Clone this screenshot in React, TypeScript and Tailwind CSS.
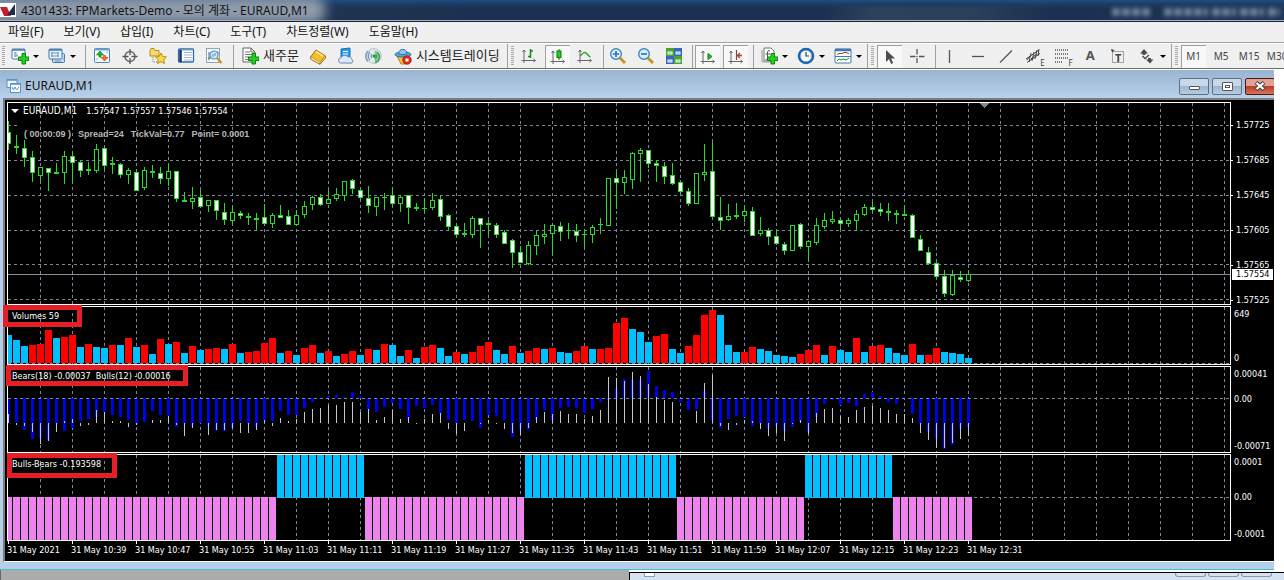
import type { ReactNode } from "react";

type Kind = "f" | "h" | "d";
type Candle = [high: number, low: number, top: number, bottom: number, kind: Kind];

const STEP = 8;
const GRID_X = Array.from({ length: 38 }, (_, i) => 32 + i * 32);

// Chart levels are kept in pixels below the top of the window's client area.
const candles: Candle[] = [
  [121, 150, 132, 144, "f"], [135, 154, 146, 148, "d"], [140, 167, 148, 158, "f"], [151, 182, 157, 173, "f"],
  [167, 183, 167, 176, "h"], [168, 191, 168, 173, "f"], [163, 174, 172, 174, "d"], [151, 184, 156, 173, "h"],
  [151, 183, 156, 163, "f"], [161, 177, 162, 171, "f"], [162, 175, 169, 171, "d"], [144, 173, 149, 171, "h"],
  [148, 169, 148, 166, "f"], [157, 174, 163, 165, "d"], [163, 178, 164, 175, "f"], [168, 184, 170, 175, "h"],
  [169, 191, 172, 191, "f"], [167, 190, 170, 188, "h"], [165, 178, 171, 173, "d"], [167, 184, 173, 179, "f"],
  [164, 186, 171, 179, "h"], [171, 202, 171, 199, "f"], [192, 202, 200, 202, "d"], [187, 209, 198, 202, "h"],
  [190, 207, 197, 207, "f"], [200, 212, 200, 206, "h"], [200, 220, 200, 211, "f"], [203, 225, 212, 220, "f"],
  [206, 223, 212, 221, "h"], [211, 219, 213, 216, "f"], [213, 225, 216, 218, "d"], [213, 230, 218, 220, "d"],
  [204, 226, 217, 224, "f"], [213, 228, 215, 224, "h"], [205, 218, 215, 218, "f"], [210, 225, 216, 225, "f"],
  [210, 226, 215, 225, "h"], [201, 218, 206, 215, "h"], [196, 210, 197, 205, "h"], [194, 206, 197, 205, "f"],
  [190, 204, 199, 204, "h"], [188, 201, 194, 199, "h"], [181, 201, 181, 196, "h"], [179, 194, 180, 189, "f"],
  [188, 199, 190, 198, "f"], [186, 213, 198, 206, "f"], [197, 216, 197, 207, "h"], [193, 210, 197, 198, "d"],
  [187, 206, 195, 204, "f"], [195, 212, 197, 204, "h"], [195, 224, 195, 208, "f"], [203, 211, 207, 209, "d"],
  [198, 213, 208, 209, "d"], [193, 210, 200, 208, "h"], [195, 221, 199, 217, "f"], [214, 230, 215, 227, "f"],
  [223, 237, 226, 235, "f"], [223, 237, 233, 235, "d"], [216, 238, 218, 235, "h"], [218, 248, 218, 225, "f"],
  [220, 235, 223, 225, "d"], [223, 238, 225, 235, "f"], [230, 244, 232, 244, "f"], [239, 268, 240, 253, "f"],
  [246, 263, 252, 263, "f"], [241, 265, 245, 264, "h"], [230, 255, 235, 246, "h"], [224, 244, 234, 237, "h"],
  [223, 254, 225, 234, "h"], [222, 241, 226, 232, "f"], [223, 239, 230, 231, "d"], [224, 242, 231, 236, "f"],
  [230, 248, 234, 235, "d"], [225, 243, 227, 235, "h"], [218, 234, 224, 225, "d"], [178, 226, 178, 226, "h"],
  [172, 209, 178, 183, "f"], [170, 194, 177, 183, "h"], [152, 189, 153, 180, "h"], [148, 182, 150, 154, "h"],
  [150, 168, 150, 164, "f"], [160, 182, 163, 166, "f"], [162, 184, 166, 177, "f"], [163, 185, 175, 184, "f"],
  [180, 195, 182, 192, "f"], [188, 206, 191, 204, "f"], [173, 204, 173, 204, "h"], [144, 181, 172, 175, "h"],
  [142, 219, 171, 217, "f"], [197, 230, 217, 221, "f"], [204, 221, 216, 220, "h"], [203, 219, 215, 217, "d"],
  [205, 222, 211, 216, "h"], [207, 236, 211, 236, "f"], [217, 236, 230, 234, "h"], [228, 245, 230, 237, "f"],
  [229, 245, 236, 244, "f"], [242, 255, 244, 251, "f"], [225, 251, 225, 251, "h"], [223, 249, 224, 247, "f"],
  [240, 262, 241, 247, "h"], [218, 245, 225, 243, "h"], [213, 229, 220, 227, "h"], [211, 224, 219, 222, "h"],
  [219, 230, 220, 224, "f"], [218, 227, 220, 224, "h"], [210, 231, 214, 221, "h"], [204, 216, 207, 215, "h"],
  [202, 212, 207, 210, "f"], [203, 216, 209, 212, "f"], [203, 221, 211, 213, "d"], [210, 224, 213, 215, "d"],
  [205, 216, 214, 216, "d"], [214, 238, 215, 238, "f"], [235, 251, 239, 251, "f"], [247, 265, 252, 264, "f"],
  [262, 278, 263, 277, "f"], [270, 297, 276, 294, "f"], [270, 296, 275, 295, "h"], [271, 282, 277, 280, "f"],
  [270, 282, 274, 281, "h"],
];

const volumeTops = [
  335, 340, 346, 345, 344, 330, 338, 337, 335, 347, 344, 347, 348, 345, 345, 338, 347, 345, 354, 339, 344, 342, 353,
  346, 350, 349, 348, 349, 344, 353, 352, 351, 343, 338, 353, 351, 355, 348, 345, 353, 351, 356, 354, 351, 355, 349,
  350, 344, 345, 356, 350, 358, 347, 345, 348, 356, 352, 354, 352, 346, 342, 350, 354, 346, 353, 351, 348, 349, 348,
  352, 353, 351, 346, 349, 349, 348, 323, 318, 329, 332, 342, 336, 334, 349, 353, 346, 335, 315, 310, 315, 345, 352,
  352, 347, 349, 351, 355, 356, 357, 354, 350, 345, 355, 346, 350, 352, 338, 352, 346, 345, 348, 353, 355, 344, 355,
  355, 348, 352, 353, 354, 358,
];

// One letter per bar: r = red, c = cyan.
const volumeKinds = [
  "cccrrrcrrc", "rccrcrcrcr", "crcrcrrcrc", "rrrrcrcrrc", "rcrrcrcrcc", "rcrrccrcrr", "rccrcrrcrc",
  "crrcrrrrcc", "crrccrrrrc", "ccrrcccccr", "rrcrccrcrr", "cccrcrrccc", "c",
].join("");

const bearLevels = [
  420, 422, 430, 439, 438, 440, 424, 431, 428, 421, 419, 417, 412, 415, 417, 420, 424, 422, 411, 415, 416, 427, 424,
  426, 423, 426, 430, 431, 428, 421, 424, 427, 421, 421, 411, 415, 415, 408, 402, 399, 396, 395, 397, 392, 396, 410,
  412, 407, 403, 409, 419, 406, 408, 405, 414, 420, 423, 420, 421, 428, 415, 416, 420, 437, 429, 430, 420, 410, 420,
  408, 407, 408, 413, 409, 402, 400, 388, 379, 380, 380, 371, 386, 390, 392, 402, 410, 409, 391, 420, 428, 419, 416,
  417, 426, 424, 429, 426, 431, 427, 422, 432, 417, 404, 400, 405, 403, 406, 394, 392, 396, 402, 404, 397, 414, 424,
  432, 439, 449, 445, 429, 427,
];

const bullLevels = [
  414, 425, 426, 432, 444, 441, 432, 421, 419, 426, 425, 410, 412, 421, 421, 427, 425, 423, 420, 420, 416, 425, 436,
  428, 423, 435, 430, 430, 428, 433, 433, 430, 420, 426, 418, 421, 419, 412, 409, 408, 405, 405, 402, 402, 412, 409,
  420, 417, 410, 419, 417, 424, 419, 414, 413, 429, 434, 431, 423, 424, 420, 424, 429, 433, 435, 428, 417, 412, 414,
  411, 414, 414, 419, 416, 410, 377, 378, 381, 372, 376, 384, 397, 400, 402, 420, 423, 411, 383, 375, 426, 430, 425,
  420, 421, 429, 436, 433, 441, 424, 420, 434, 413, 409, 408, 416, 417, 410, 407, 406, 408, 410, 414, 414, 418, 433,
  440, 448, 448, 443, 439, 436,
];

const trendRuns: [from: number, to: number, up: boolean][] = [
  [0, 33, false], [34, 44, true], [45, 64, false], [65, 83, true], [84, 99, false], [100, 110, true], [111, 120, false],
];

const priceLabels = ["1.57725", "1.57685", "1.57645", "1.57605", "1.57565", "1.57525"];
const priceGrid = [125, 160, 195, 230, 264, 299];
const times = [
  "2021", "10:39", "10:47", "10:55", "11:03", "11:11", "11:19", "11:27", "11:35", "11:43", "11:51", "11:59", "12:07",
  "12:15", "12:23", "12:31",
];

const GRID = "#7d8794";
const GREEN = "#2fd62f";

function Grid({ rows }: { rows: number[] }) {
  return (
    <g stroke={GRID} strokeDasharray="3 3">
      {GRID_X.map((x) => (
        <line key={x} x1={x + 0.5} x2={x + 0.5} y1="0" y2="100%" />
      ))}
      {rows.map((y) => (
        <line key={y} x1="0" x2="100%" y1={y + 0.5} y2={y + 0.5} />
      ))}
    </g>
  );
}

function Panel({ height, axis, children, caption }: { height: string; axis: ReactNode; children: ReactNode; caption: ReactNode }) {
  return (
    <div className={`flex ${height}`}>
      <div className="relative min-w-0 flex-1 border border-white">
        <svg className="absolute inset-0 h-full w-full" shapeRendering="crispEdges">{children}</svg>
        {caption}
      </div>
      <div className="relative w-[43px] shrink-0">{axis}</div>
    </div>
  );
}

function PriceChart() {
  const top = 103;
  return (
    <>
      <Grid rows={priceGrid.map((y) => y - top)} />
      <rect x="10" y="21" width="130" height="3" fill="#000" />
      <line x1="0" x2="100%" y1="171.5" y2="171.5" stroke="#8a8a9c" />
      <path d="M972 0h9v1l-4.500 4l-4.500 -4z" fill="#7d8794" />
      {candles.map(([high, low, t, b, kind], i) => {
        const x = i * STEP;
        return (
          <g key={i}>
            <rect x={x} y={high - top} width="1" height={low - high} fill={GREEN} />
            {kind === "d" ? (
              <rect x={x - 2} y={t - top} width="5" height={b - t} fill={GREEN} />
            ) : (
              <rect
                x={x - 1.5}
                y={t - top + 0.5}
                width="4"
                height={b - t - 1}
                fill={kind === "f" ? "#fff" : "#000"}
                stroke={GREEN}
              />
            )}
          </g>
        );
      })}
    </>
  );
}

function VolumeChart() {
  return (
    <>
      <Grid rows={[56]} />
      {volumeTops.map((y, i) => (
        <rect key={i} x={i * STEP - 3} y={y - 307} width="7" height={363 - y} fill={volumeKinds[i] === "r" ? "#ff0000" : "#00bfff"} />
      ))}
    </>
  );
}

function PowerChart() {
  const top = 367;
  const zero = 398;
  const base = 423;
  return (
    <>
      <Grid rows={[]} />
      {bearLevels.map((y, i) => (
        <rect key={i} x={i * STEP - 1} y={Math.min(y, zero) - top} width="3" height={Math.abs(y - zero)} fill="#0000e6" />
      ))}
      <line x1="0" x2="100%" y1="31.5" y2="31.5" stroke={GRID} strokeDasharray="3 3" />
      {bullLevels.map((y, i) => (
        <rect key={i} x={i * STEP} y={Math.min(y, base) - top} width="1" height={Math.abs(y - base)} fill="#c8c8c8" />
      ))}
    </>
  );
}

function TrendChart() {
  return (
    <>
      <Grid rows={[42]} />
      {trendRuns.flatMap(([from, to, up]) =>
        Array.from({ length: to - from + 1 }, (_, k) => {
          const x = (from + k) * STEP - 3;
          return <rect key={x} x={x} y={up ? 0 : 42} width="7" height="43" fill={up ? "#00bfff" : "#ee82ee"} />;
        }),
      )}
    </>
  );
}

function Icon({ children }: { children: ReactNode }) {
  return (
    <svg className="h-[18px] w-[18px] shrink-0" viewBox="0 0 18 18" fill="none" aria-hidden="true">
      {children}
    </svg>
  );
}

const plus = (
  <path d="M11 6.500h3.500v3.500H18v3.500h-3.500V17H11v-3.500H7.500V10H11z" fill="#22d022" stroke="#0b850b" strokeWidth="1" />
);
const axes = <path d="M4 3v13M1.500 13.500H15M2.500 5L4 3l1.500 2M13.500 12l2 1.500l-2 1.500" stroke="#666" />;

const icons = {
  newChart: (<><rect x="1" y="2" width="13" height="10" rx="1" fill="#fff" stroke="#3f78ad" /><path d="M1 3h13" stroke="#3f78ad" strokeWidth="1.500" /><path d="M3 6h3M3 9h4M4 5v5M6 7v2" stroke="#7896b4" />{plus}</>),
  profiles: (<><rect x="4.500" y="6.500" width="12" height="9" rx="1" fill="#c7dcf2" stroke="#3f78ad" /><rect x="1" y="2" width="13" height="10" rx="1" fill="#e8f2fc" stroke="#3f78ad" /><path d="M1 3h13" stroke="#3f78ad" strokeWidth="1.500" /><path d="M3 6h8M3 9h8M4 5v5M10 5v5M15 12h2M7 14h6" stroke="#6f94ba" /></>),
  market: (<><rect x="1.500" y="1.500" width="15" height="14" rx="1" fill="#f7fbff" stroke="#4a86bd" /><path d="M2 2.500h14" stroke="#6da2d2" strokeWidth="2" /><path d="M7 4l3.500 4H8v2H6V8H3.500z" fill="#22b222" stroke="#087808" strokeWidth=".6" /><path d="M11.500 14L8 10.500h2.500v-2h2v2H15z" fill="#f0722a" stroke="#ad3a08" strokeWidth=".6" /><path d="M13 5h2M3 12h2" stroke="#9ab7d2" /></>),
  crosshair: (<><circle cx="9" cy="9.500" r="5" stroke="#666" strokeWidth="1.400" /><path d="M9 2v6M9 11v6M1.500 9.500h6M10.500 9.500h6" stroke="#555" strokeWidth="1.300" /></>),
  navigator: (<><path d="M1 3.500V9h9V3.500H6l-1-2H2z" fill="#f7d96c" stroke="#b58f18" /><path d="M4 10v5h4" stroke="#777" strokeDasharray="1 1" /><path d="M12 6l1.700 3.500l3.800.5l-2.800 2.700l.7 3.800L12 14.700l-3.400 1.800l.7-3.800L6.500 10l3.800-.5z" fill="#ffd84a" stroke="#bd8c0e" /></>),
  terminal: (<><rect x="1.500" y="2" width="15" height="13" rx="1" fill="#fff" stroke="#2f6dab" strokeWidth="1.300" /><path d="M3.500 3v12" stroke="#172f5b" strokeWidth="2.500" /><path d="M7 5.500h8M7 8h8M7 10.500h8M7 13h8" stroke="#9eb9d7" /><path d="M5 3h11" stroke="#6fa1d3" /></>),
  tester: (<><rect x="1.500" y="1.500" width="13" height="14" fill="#f4f8fb" stroke="#8da7bf" /><path d="M4 13V5M3 11h3M12 4v4M11 6h3" stroke="#506f8c" /><circle cx="9" cy="8" r="4" fill="#cce8fb" stroke="#5c92bd" strokeWidth="1.200" /><path d="M8 7v3M10 6v3" stroke="#5c92bd" /><path d="M12 11l4.500 5" stroke="#c8951c" strokeWidth="2.400" /></>),
  order: (<><path d="M2 1h8l4 4v10H2z" fill="#fff" stroke="#666" /><path d="M10 1v4h4" stroke="#666" /><path d="M4 5h5M4 7.500h7M4 10h4M4 12.500h3" stroke="#777" />{plus}</>),
  editor: (<><path d="M1.500 10L7 3l9.500 6L11 15.500z" fill="#f3bd32" stroke="#a56c08" /><path d="M1.500 10v2L11 17.300V15.500M11 17.300L16.500 11V9" fill="#fff2b5" stroke="#a56c08" /><path d="M7 4.500l7 4.500" stroke="#ffe78e" strokeWidth="1.500" /></>),
  cloud: (<><path d="M4 2l9-1v9H4z" fill="#279de8" stroke="#176db5" /><path d="M6 4.500h5M6 7h5" stroke="#fff" strokeWidth="1.200" /><path d="M3.500 16a2.700 2.700 0 01.5-5.300a4 4 0 017-.7a3 3 0 014 2.500a2 2 0 01-.3 3.500z" fill="#dce9f8" stroke="#6387b7" /></>),
  signal: (<><circle cx="9" cy="9" r="7.300" fill="#e3f0ee" stroke="#a5bfd4" /><path d="M5 13a5.500 5.500 0 010-8M7 11a3 3 0 010-4M3 14.500A7 7 0 013 4" stroke="#7898b9" strokeWidth="1.300" /><path d="M9.500 3.500a5.500 5.500 0 010 11z" fill="#8ecb94" /><path d="M12 5.500a5.500 5.500 0 01-2 10M11 7.500a3 3 0 01-1 4" stroke="#3f9b52" strokeWidth="1.400" /><circle cx="9" cy="9" r="1.500" fill="#288b3c" /></>),
  robot: (<><path d="M3 9h12l-4 8H7z" fill="#f4c33c" stroke="#b67a14" /><ellipse cx="9" cy="7.500" rx="8" ry="2.600" fill="#5aa9df" stroke="#2a70a8" /><path d="M4.500 6.500C5 1 12.500 1 13 6.500c-2 1.500-6.500 1.500-8.500 0z" fill="#8bc9ef" stroke="#2a70a8" /><circle cx="13" cy="13" r="4.300" fill="#dc2a16" stroke="#9c160b" strokeWidth=".7" /><rect x="11.500" y="11.500" width="3" height="3" fill="#fff" /></>),
  bars: (<>{axes}<path d="M10.500 2v9M8 9.500h2.500M10.500 4H13" stroke="#138c13" strokeWidth="1.500" /></>),
  candle: (<>{axes}<path d="M10 1v11" stroke="#087808" /><rect x="8" y="3" width="4" height="6.500" fill="#29cc29" stroke="#087808" /></>),
  line: (<>{axes}<path d="M4 9c2-1 3-4 5-3.500S12 9 14.500 10" stroke="#279b27" strokeWidth="1.300" /></>),
  zoomIn: (<><path d="M11 11l5 5" stroke="#ca971d" strokeWidth="3" /><circle cx="7" cy="7" r="5.300" fill="#d9effd" stroke="#3e86c2" strokeWidth="1.400" /><path d="M7 4v6M4 7h6" stroke="#2b6faf" strokeWidth="1.600" /></>),
  zoomOut: (<><path d="M11 11l5 5" stroke="#ca971d" strokeWidth="3" /><circle cx="7" cy="7" r="5.300" fill="#d9effd" stroke="#3e86c2" strokeWidth="1.400" /><path d="M4 7h6" stroke="#2b6faf" strokeWidth="1.600" /></>),
  tiles: (<><path d="M1 1h8v8H1zM9 9h8v8H9z" fill="#48a52d" /><path d="M9 1h8v8H9zM1 9h8v8H1z" fill="#3468bc" /><path d="M2.500 4.500h5v3h-5zM10.500 4.500h5v3h-5zM2.500 12.500h5v3h-5zM10.500 12.500h5v3h-5z" fill="#f3f8ff" /><path d="M3.500 6h3M11.500 6h3M3.500 14h3M11.500 14h3" stroke="#8aa4c4" /></>),
  scroll: (<>{axes}<path d="M9 5.500l4 3l-4 3z" fill="#29bf29" stroke="#0d850d" /></>),
  shift: (<>{axes}<path d="M9.500 2v10" stroke="#555" strokeWidth="1.200" /><path d="M15 7.500h-4M13 5l-2.500 2.500L13 10" stroke="#b84218" strokeWidth="1.400" /></>),
  indicator: (<><path d="M4 1h7l3 3v10H4z" fill="#fff" stroke="#777" /><path d="M2 3v12h9" stroke="#999" /><path d="M10 4c-2-1-2.500 0-2.500 2v5c0 2-1 2-2 1.500M5.500 7H10" stroke="#555" />{plus}</>),
  clock: (<><circle cx="9" cy="9" r="7" fill="#f2f8fd" stroke="#1d68b6" strokeWidth="2.600" /><path d="M9 5v4h3" stroke="#444" strokeWidth="1.200" /><path d="M9 3v1M9 14v1M3.500 9h1M13.500 9h1" stroke="#777" /></>),
  template: (<><rect x="1" y="2" width="16" height="14" rx="1" fill="#fff" stroke="#3f78b3" /><path d="M1 3h16" stroke="#3f78b3" strokeWidth="2.500" /><path d="M1 9.500h16" stroke="#3f78b3" /><path d="M3 7.500l2-1h3l2-1h2l3 1" stroke="#a53d20" /><path d="M3 14l2-2l2 1l2-1l3 1l3-2" stroke="#24852f" /></>),
  cursor: <path d="M5 2v12l3-3l2.200 5l2-1L10 10.500h4z" fill="#4c4c4c" />,
  cross: <path d="M9 2v5.500M9 11v5M2 9.500h5.500M11 9.500h5.500M9 9v1" stroke="#555" strokeWidth="1.300" />,
  vline: <path d="M8.500 3v13" stroke="#555" strokeWidth="1.300" />,
  hline: <path d="M3 9.500h12" stroke="#555" strokeWidth="1.300" />,
  trend: <path d="M3 15.500L15 3.500" stroke="#555" strokeWidth="1.300" />,
  channel: <path d="M1 12L14 3M2 15.500L15 6.500M4 15l2-9M7 14l2-9M10 12l2-9M13 9l1-7M2 13l3-4M6 12l3-3M9 9l3-2" stroke="#444" />,
  fibo: <path d="M2 3h14M2 7h14M2 11h14M2 15h8" stroke="#555" strokeDasharray="1 1" strokeWidth="1.300" />,
  label: (<><rect x="3.500" y="4.500" width="11" height="11" stroke="#555" strokeDasharray="1 1" /><path d="M2 2l3.500 1L3 5.500z" fill="#444" /></>),
  arrows: (<><path d="M2 6.500L6 2l4 4.500H7.500V8h-3V6.500z" fill="#4c4c4c" /><path d="M4.500 9l2.500 2.500L11 8" stroke="#4c4c4c" strokeWidth="1.300" /><path d="M8 12.500h2V11h3v1.500h2.500L12 16.500z" fill="#4c4c4c" /></>),
};

function Tool({ label, icon, pressed, badge, children }: { label: string; icon?: ReactNode; pressed?: boolean; badge?: string; children?: ReactNode }) {
  return (
    <button
      type="button"
      aria-label={label}
      aria-pressed={pressed}
      className={`relative mr-[3px] flex h-[23px] w-[25px] shrink-0 items-center justify-center text-[10px] text-[#444] ${
        pressed ? "border-t border-l border-[#a0a0a0] bg-[#f8f8f8]" : ""
      }`}
    >
      {icon && <Icon>{icon}</Icon>}
      {children}
      {badge && <span className="absolute right-0.5 bottom-px text-[8px] leading-[8px]">{badge}</span>}
    </button>
  );
}

function DropTool({ label, icon }: { label: string; icon: ReactNode }) {
  return (
    <button type="button" aria-label={label} className="mr-[3px] flex h-[23px] w-[34px] shrink-0 items-center gap-1 pl-1">
      <Icon>{icon}</Icon>
      <span className="h-0 w-0 border-x-[3px] border-t-[3px] border-x-transparent border-t-black" />
    </button>
  );
}

function WideTool({ icon, children }: { icon: ReactNode; children: ReactNode }) {
  return (
    <button type="button" className="mr-[3px] flex h-[23px] shrink-0 items-center gap-1 px-1 text-[13px] whitespace-nowrap text-[#222]">
      <Icon>{icon}</Icon>
      {children}
    </button>
  );
}

function Sep({ wide }: { wide?: boolean }) {
  return (
    <span className={`flex h-[23px] shrink-0 justify-center ${wide ? "w-2" : "w-[5px]"}`}>
      <span className="w-px bg-[#a0a0a0]" />
    </span>
  );
}

function Grip() {
  return <span className="h-5 w-[3px] shrink-0 bg-[repeating-linear-gradient(to_bottom,#a8a8a8_0_1px,#f0f0f0_1px_2px)]" />;
}

function BandEdge() {
  return (
    <span className="flex w-[10px] shrink-0 items-center gap-[3px]">
      <span className="h-6 w-px bg-[#a0a0a0]" />
      <Grip />
    </span>
  );
}

const menus = ["파일(F)", "보기(V)", "삽입(I)", "차트(C)", "도구(T)", "차트정렬(W)", "도움말(H)"];

function TitleBar() {
  return (
    <header className="relative flex h-[22px] items-center overflow-hidden border-b border-[#14233c] bg-[linear-gradient(to_bottom,#1d4f84_0,#1d3b62_4px,transparent_9px),linear-gradient(100deg,#2a3c56_0,#1b3050_38%,#1b3050_64%,#2e415c_68%,#2b3e5a_76%,#1b3050_82%,#1e3555_100%)]">
      <div className="absolute -top-1 -left-6 h-7 w-[350px] rounded-full bg-[#8f9bab] blur-[6px]" />
      <svg className="relative mb-px h-[14px] w-4 shrink-0" viewBox="0 0 16 14" aria-hidden="true">
        <path d="M0 0h16v14H0z" fill="#fff" />
        <path d="M0 4h7l4 9H4z" fill="#c4202c" />
        <path d="M15 1v11H7z" fill="#1c2c4c" />
      </svg>
      <h1 className="relative ml-[5px] text-[12px] whitespace-nowrap text-[#111]">4301433: FPMarkets-Demo - 모의 계좌 - EURAUD,M1</h1>
      <svg className="relative ml-auto h-4 w-[176px] shrink-0 blur-[2px]" viewBox="0 0 176 16" aria-hidden="true">
        <path d="M4 9h38M56 9h44M104 9h24M132 9h24M160 9h12" stroke="#6c809b" strokeWidth="8" strokeDasharray="8 2" />
      </svg>
      <div className="absolute inset-x-0 bottom-0 h-px bg-[#a9b2bf]" />
    </header>
  );
}

function Toolbar() {
  return (
    <div role="toolbar" className="flex h-[26px] items-center overflow-hidden border-t border-b border-t-white border-b-[#6c6c6c] bg-[#f0f0f0] pl-0.5">
      <Grip />
      <span className="w-0.5 shrink-0" />
      <DropTool label="New chart" icon={icons.newChart} />
      <DropTool label="Profiles" icon={icons.profiles} />
      <Sep wide />
      <Tool label="Market watch" icon={icons.market} />
      <Tool label="Data window" icon={icons.crosshair} />
      <Tool label="Navigator" icon={icons.navigator} />
      <Tool label="Terminal" icon={icons.terminal} />
      <Tool label="Strategy tester" icon={icons.tester} />
      <Sep wide />
      <WideTool icon={icons.order}>새주문</WideTool>
      <Tool label="Editor" icon={icons.editor} />
      <Tool label="Cloud" icon={icons.cloud} />
      <Tool label="Signals" icon={icons.signal} />
      <WideTool icon={icons.robot}>시스템트레이딩</WideTool>
      <BandEdge />
      <Tool label="Bar chart" icon={icons.bars} />
      <Tool label="Candlesticks" icon={icons.candle} pressed />
      <Tool label="Line chart" icon={icons.line} />
      <Sep />
      <Tool label="Zoom in" icon={icons.zoomIn} />
      <Tool label="Zoom out" icon={icons.zoomOut} />
      <Tool label="Tile windows" icon={icons.tiles} />
      <Sep />
      <Tool label="Auto scroll" icon={icons.scroll} pressed />
      <Tool label="Chart shift" icon={icons.shift} pressed />
      <Sep />
      <DropTool label="Indicators" icon={icons.indicator} />
      <DropTool label="Periods" icon={icons.clock} />
      <DropTool label="Templates" icon={icons.template} />
      <BandEdge />
      <Tool label="Cursor" icon={icons.cursor} pressed />
      <Tool label="Crosshair" icon={icons.cross} />
      <Sep />
      <Tool label="Vertical line" icon={icons.vline} />
      <Tool label="Horizontal line" icon={icons.hline} />
      <Tool label="Trendline" icon={icons.trend} />
      <Tool label="Equidistant channel" icon={icons.channel} badge="E" />
      <Tool label="Fibonacci" icon={icons.fibo} badge="F" />
      <Tool label="Text"><span className="text-[13px] font-bold text-[#555]">A</span></Tool>
      <Tool label="Text label" icon={icons.label}><span className="absolute inset-x-0 top-[5px] text-center text-[11px] leading-4 font-bold">T</span></Tool>
      <DropTool label="Arrows" icon={icons.arrows} />
      <BandEdge />
      <Tool label="M1" pressed>M1</Tool>
      <Tool label="M5">M5</Tool>
      <Tool label="M15">M15</Tool>
      <Tool label="M30">M30</Tool>
    </div>
  );
}

function AxisLabel({ place, children }: { place: string; children: ReactNode }) {
  return <span className={`absolute left-[3px] leading-[12px] ${place}`}>{children}</span>;
}

function RedBox({ place, children }: { place: string; children: ReactNode }) {
  return <div className={`absolute z-10 border-[5px] border-[#e61e25] leading-[12px] whitespace-nowrap ${place}`}>{children}</div>;
}

function ChartWindow() {
  return (
    <section className="mr-[10px] overflow-hidden border-t border-white bg-[#b5cfe8]">
      <div className="flex h-7 items-center bg-[linear-gradient(to_bottom,#99b4d1,#b9d1ea)] pt-1 pl-[6px]">
        <svg className="h-4 w-4 shrink-0" viewBox="0 0 16 16" fill="none" aria-hidden="true">
          <rect x="1" y="1.500" width="10" height="8" fill="#eef6fd" stroke="#5a93c8" />
          <rect x="4.500" y="5.500" width="10" height="9" fill="#fff" stroke="#5a93c8" />
          <path d="M1 2h10M5 6h9" stroke="#5a93c8" strokeWidth="1.500" />
          <path d="M6 9l1.500 3L9 9l1.500 3L13 9" stroke="#5a93c8" />
        </svg>
        <h2 className="ml-[3px] text-[12px] text-[#111]">EURAUD,M1</h2>
        <div className="-mr-[1px] ml-auto flex gap-[3px]">
          <button type="button" aria-label="Minimize" className="flex h-[17px] w-[30px] items-center justify-center rounded-[2px] border border-[#5d7085] bg-[linear-gradient(to_bottom,#c8d8e9_50%,#9fb6d0_50%,#b7cce2)]">
            <span className="mt-1 h-1 w-[11px] rounded-[1px] border border-[#555] bg-white" />
          </button>
          <button type="button" aria-label="Maximize" className="flex h-[17px] w-[30px] items-center justify-center rounded-[2px] border border-[#5d7085] bg-[linear-gradient(to_bottom,#c8d8e9_50%,#9fb6d0_50%,#b7cce2)]">
            <span className="flex h-[9px] w-[11px] items-center justify-center rounded-[1px] border border-[#555] bg-white">
              <span className="h-[3px] w-[5px] border border-[#555]" />
            </span>
          </button>
          <button type="button" aria-label="Close" className="flex h-[17px] w-[30px] items-center justify-center rounded-[2px] border border-[#4f1612] bg-[linear-gradient(to_bottom,#e0a093_50%,#bd3c25_50%,#d5765c)]">
            <svg className="h-[10px] w-3" viewBox="0 0 12 10" aria-hidden="true">
              <path d="M2 1.500l8 7M10 1.500l-8 7" stroke="#444" strokeWidth="4" />
              <path d="M2.500 2l7 6M9.500 2l-7 6" stroke="#fff" strokeWidth="2.300" />
            </svg>
          </button>
        </div>
      </div>
      <div className="ml-[3px] border-t-2 border-b border-l-2 border-t-[#7c7c7c] border-b-white border-l-[#7c7c7c] bg-black pt-0.5 pl-0.5 font-['DejaVu_Sans_Condensed','Noto_Sans',sans-serif] text-[9px] text-white">
        <div className="flex flex-col gap-px">
          <Panel
            height="h-[203px]"
            axis={
              <>
                <ol className="pt-[6px]">
                  {priceLabels.map((p) => (
                    <li key={p} className="flex h-[35px] items-center gap-[3px]">
                      <span className="h-px w-0.5 bg-white" />
                      {p}
                    </li>
                  ))}
                </ol>
                <span className="absolute top-[167px] left-px bg-white pr-1 pl-1 leading-[11px] text-black">1.57554</span>
              </>
            }
            caption={
              <div className="relative pl-[15px] whitespace-nowrap">
                <p className="relative flex items-center gap-[9px] leading-4">
                  <span className="absolute top-[6px] -left-3 border-x-4 border-t-4 border-x-transparent border-t-white" />
                  <span className="text-[10px]">EURAUD,M1</span>
                  <span>1.57547 1.57557 1.57546 1.57554</span>
                </p>
                <p className="mt-[9px] flex gap-[7px] pl-px font-['Liberation_Sans',sans-serif] leading-[12px] font-bold text-[#b8b8b8]">
                  <span>( 00:00:09 )</span>
                  <span>Spread=24</span>
                  <span>TickVal=0.77</span>
                  <span>Point= 0.0001</span>
                </p>
              </div>
            }
          >
            <PriceChart />
          </Panel>
          <Panel
            height="h-[59px]"
            axis={<><AxisLabel place="top-[2px]">649</AxisLabel><AxisLabel place="bottom-[1px]">0</AxisLabel></>}
            caption={<RedBox place="-top-[2px] -left-[5px] h-[22px] w-[79px] pl-1">Volumes 59</RedBox>}
          >
            <VolumeChart />
          </Panel>
          <Panel
            height="h-[87px]"
            axis={<><AxisLabel place="top-[2px]">0.00041</AxisLabel><AxisLabel place="top-[27px]">0.00</AxisLabel><AxisLabel place="bottom-[1px]">-0.00071</AxisLabel></>}
            caption={<RedBox place="-top-[2px] -left-[2px] h-[21px] w-[182px] pl-px">Bears(18) -0.00037&nbsp; Bulls(12) -0.00016</RedBox>}
          >
            <PowerChart />
          </Panel>
          <Panel
            height="h-[87px]"
            axis={<><AxisLabel place="top-[2px]">0.0001</AxisLabel><AxisLabel place="top-[37px]">0.00</AxisLabel><AxisLabel place="bottom-[1px]">-0.0001</AxisLabel></>}
            caption={<RedBox place="-top-[2px] -left-px h-[25px] w-[110px]">Bulls-Bears -0.193598</RedBox>}
          >
            <TrendChart />
          </Panel>
        </div>
        <ol className="flex h-5 overflow-hidden pl-px">
          {times.map((t) => (
            <li key={t} className="w-16 shrink-0 whitespace-nowrap">
              <span className="block h-[3px] w-px bg-white" />
              <span className="-ml-px block leading-[13px]">31 May {t}</span>
            </li>
          ))}
        </ol>
      </div>
      <div className="h-2 border-b border-[#42bfe0]" />
    </section>
  );
}

export default function App() {
  return (
    <div className="min-h-screen overflow-hidden bg-white font-['Noto_Sans','Noto_Sans_CJK_KR',sans-serif]">
      <TitleBar />
      <nav className="flex h-[21px] items-center gap-5 border-b border-[#a0a0a0] bg-[#f0f0f0] pl-2">
        {menus.map((m) => (
          <button key={m} type="button" className="text-[12px] leading-4 whitespace-nowrap text-[#111]">{m}</button>
        ))}
      </nav>
      <Toolbar />
      <ChartWindow />
      <footer className="flex h-[10px] overflow-hidden">
        <div className="w-[49%] border-l border-[#666] bg-[#ababab]" />
        <div className="mt-0.5 flex flex-1 items-start justify-end gap-[2px] border-t border-l border-black bg-[#d6e3f0] pr-3">
          <span className="mr-auto ml-[14px] h-1 w-[11px] border border-t-0 border-[#7fa3c8] bg-white" />
          <span className="h-1 w-[31px] rounded-b-[3px] border border-t-0 border-[#8b98ad]" />
          <span className="h-1 w-[31px] rounded-b-[3px] border border-t-0 border-[#8b98ad]" />
          <span className="h-1 w-[31px] rounded-b-[3px] border border-t-0 border-[#8b98ad]" />
        </div>
      </footer>
    </div>
  );
}
